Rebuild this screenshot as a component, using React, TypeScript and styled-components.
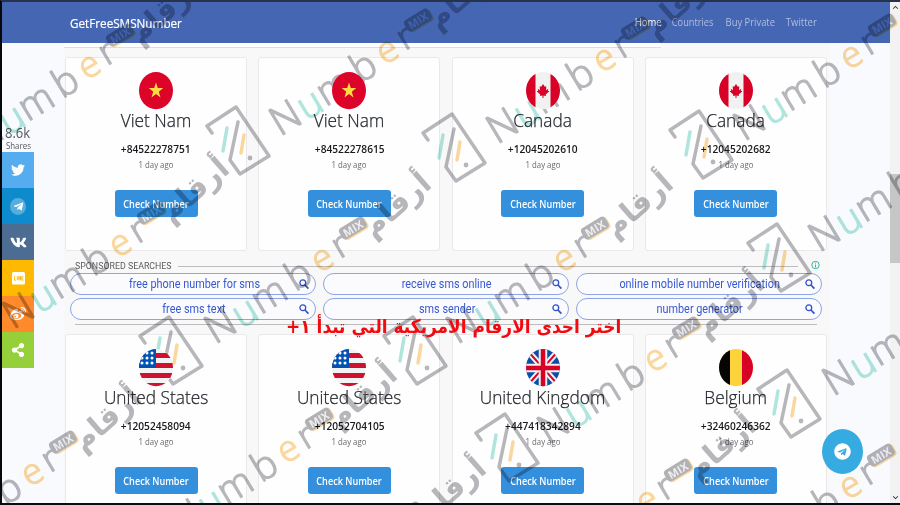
import React from "react";
import styled, { createGlobalStyle, css } from "styled-components";
import { FaTwitter, FaTelegramPlane, FaTelegram, FaVk, FaWeibo, FaShareAlt } from "react-icons/fa";
import { MdKeyboardArrowUp, MdKeyboardArrowDown } from "react-icons/md";

const Global = createGlobalStyle`
  * { box-sizing: border-box; }
  html, body { margin: 0; padding: 0; overflow: hidden; }
  body { font-family: "Open Sans", "Noto Sans", sans-serif; color: #2b2f33; }
`;

const Screen = styled.div`
  position: relative;
  display: flex;
  width: 900px;
  height: 505px;
  overflow: hidden;
  background: #f9fafe;
  border-top: 2px solid #27334c;
  border-left: 2px solid #07080c;
  border-bottom: 2px solid #0b0c12;
`;

const Main = styled.div`
  width: 888px;
  height: 501px;
  overflow: hidden;
`;

/* Text scaled horizontally around its anchor edge. */
const Fit = styled.span<{ $x: number; $origin?: string }>`
  display: inline-block;
  white-space: nowrap;
  transform: scaleX(${(p) => p.$x});
  transform-origin: ${(p) => p.$origin ?? "center"};
`;

const Header = styled.header`
  display: flex;
  align-items: center;
  justify-content: space-between;
  height: 41px;
  padding: 0 73px 0 68px;
  background: #4466b3;
`;

const Brand = styled.div`
  width: 116px;
  color: #fff;
  font-size: 13px;
  line-height: 18px;
  -webkit-text-stroke: 0.2px #fff;
`;

const Nav = styled.nav`
  display: grid;
  grid-template-columns: 26px 42px 50px 31px;
  column-gap: 11px;
`;

const NavLink = styled.a<{ $active?: boolean }>`
  display: flex;
  justify-content: center;
  font-size: 10px;
  line-height: 14px;
  margin-bottom: 2px;
  color: ${(p) => (p.$active ? "#fff" : "#b0bfdf")};
`;

const Body = styled.div`
  display: flex;
`;

const ShareBar = styled.aside`
  width: 32px;
  padding-top: 82px;
  text-align: center;
  color: #55585c;
`;

const ShareCount = styled.div`
  display: flex;
  justify-content: center;
  font-size: 14px;
  line-height: 16px;
`;

const ShareLabel = styled.div`
  display: flex;
  justify-content: center;
  height: 11px;
  font-size: 8.5px;
  line-height: 9px;
`;

const ShareButton = styled.div<{ $color: string }>`
  display: flex;
  align-items: center;
  justify-content: center;
  height: 36px;
  color: #fff;
  font-size: 14px;
  background: ${(p) => p.$color};
`;

const TelegramDisc = styled.span`
  display: grid;
  place-items: center;
  width: 16px;
  height: 17px;
  border-radius: 50%;
  color: #fff;
  background: #55aedd;
  font-size: 11px;
`;

const Content = styled.main`
  width: 766px;
  margin-left: 30px;
  background: #f8f8f9;
`;

const TopStrip = styled.div`
  width: 597px;
  height: 5px;
  border-bottom: 1px solid #dedede;
  background: #fff;
`;

const Cards = styled.div<{ $second?: boolean }>`
  display: grid;
  grid-template-columns: repeat(4, 182px);
  column-gap: 11.3px;
  padding: ${(p) => (p.$second ? "0" : "9px")} 0 0 1px;
`;

const Card = styled.article`
  display: flex;
  flex-direction: column;
  align-items: center;
  height: 194px;
  padding-top: 14px;
  border: 1px solid #e9e9ea;
  border-radius: 3px;
  background: #fefefe;
`;

const FlagSvg = styled.svg`
  position: relative;
  z-index: 1;
  width: 34px;
  height: 38px;
`;

const Country = styled.h3`
  margin: -3px 0 0;
  font-size: 18.6px;
  font-weight: 300;
  line-height: 26px;
  color: #23272c;
  -webkit-text-stroke: 0.25px #23272c;
`;

const Phone = styled.div`
  margin-top: 8px;
  font-size: 11px;
  font-weight: 600;
  line-height: 16px;
  color: #17191c;
`;

const Ago = styled.div`
  font-size: 8.5px;
  line-height: 16px;
  color: #65686c;
`;

const CheckButton = styled.button`
  width: 83px;
  height: 27px;
  margin-top: 17px;
  padding: 0;
  border: 0;
  border-radius: 3px;
  color: #fff;
  background: #3490dc;
  font: 600 10.6px/26px "Open Sans", sans-serif;
`;

const Ad = styled.section`
  height: 83px;
  padding: 9px 8px 0 6px;
  font-family: Roboto, sans-serif;
`;

const AdHead = styled.div`
  display: flex;
  align-items: center;
  gap: 4px;
  height: 12px;
  padding-left: 5px;
  font-size: 9px;
  color: #5c5c60;
`;

const Rule = styled.div`
  flex: 1;
  height: 1px;
  background: #bdbdc1;
`;

const AdGrid = styled.div`
  display: grid;
  grid-template-columns: repeat(3, 246px);
  grid-auto-rows: 22px;
  gap: 3px 7px;
  margin-top: 1px;
`;

const Pill = styled.div`
  display: flex;
  align-items: center;
  border: 1px solid #8da5e4;
  border-radius: 11px;
  background: #fbfbfd;
  color: #3659cf;
  font-size: 12px;
  line-height: 18px;
  padding-right: 5px;
`;

const PillText = styled.div`
  flex: 1;
  display: flex;
  justify-content: center;
  padding-left: 19px;
`;

const AdFoot = styled.div`
  display: flex;
  margin: 4px 5px 0;
`;

const Scrollbar = styled.div`
  display: flex;
  flex-direction: column;
  justify-content: space-between;
  align-items: center;
  width: 10px;
  height: 501px;
  font-size: 11px;
  color: #333;
  background: #f2f2f2;
`;

const Thumb = styled.div`
  width: 10px;
  height: 89px;
  margin-bottom: 68px;
  background: #c6c6c6;
`;

const over = css`
  position: absolute;
`;

const Caption = styled.div`
  ${over}
  left: 285px;
  top: 310px;
  width: 333px;
  display: flex;
  justify-content: center;
  direction: rtl;
  color: #f20a10;
  font: bold 19px/28px "DejaVu Sans", sans-serif;
`;

const ChatBubble = styled.div`
  ${over}
  left: 820px;
  top: 427px;
  width: 41px;
  height: 45px;
  display: grid;
  place-items: center;
  border-radius: 50%;
  background: #35abe2;
  color: #fff;
  font-size: 17px;
`;

const Overlay = styled.svg`
  ${over}
  left: -2px;
  top: -2px;
  width: 900px;
  height: 505px;
  opacity: 0.82;
  mix-blend-mode: multiply;
  pointer-events: none;
`;

type Land = "vn" | "ca" | "us" | "gb" | "be";

function Flag({ land }: { land: Land }) {
  const id = React.useId();
  return (
    <FlagSvg viewBox="0 0 34 38" preserveAspectRatio="none">
      <clipPath id={id}><ellipse cx="17" cy="18.6" rx="17" ry="18.6" /></clipPath>
      <g clipPath={`url(#${id})`}>
        {land === "vn" && (
          <>
            <rect width="34" height="38" fill="#dc0428" />
            <path d="M17 10.5l1.8 5.6h5.4l-4.4 3.6 1.7 5.8-4.5-3.5-4.5 3.5 1.7-5.8-4.4-3.6h5.4z" fill="#ffda44" />
          </>
        )}
        {land === "ca" && (
          <>
            <rect width="34" height="38" fill="#f1f1f1" />
            <path d="M0 0h9.5v38H0zM24.5 0H34v38h-9.5z" fill="#d80027" />
            <path d="M17 12l1.8 2.8 1.5-.5-.3 4 2.2-1.6-.4 2 1.6.5-3.7 3.2.3 1.5-2.5-.4V26h-1v-2.5l-2.5.4.3-1.5-3.7-3.2 1.6-.5-.4-2 2.2 1.6-.3-4 1.5.5z" fill="#d80027" />
          </>
        )}
        {land === "us" && (
          <>
            <rect width="34" height="38" fill="#f3f3f3" />
            <path d="M0 4h34v5H0zM0 14h34v5H0zM0 24h34v5H0zM0 34h34v5H0z" fill="#d0102f" />
            <rect width="17" height="19" fill="#0052b4" />
            <g fill="#fff">
              {[4, 9, 14].map((y) => [3, 8, 13].map((x) => <circle key={`${x}-${y}`} cx={x} cy={y} r="1.5" />))}
            </g>
          </>
        )}
        {land === "gb" && (
          <>
            <rect width="34" height="38" fill="#0b4ea8" />
            <path d="M0 0l34 38M34 0L0 38" stroke="#f0f0f0" strokeWidth="6" />
            <path d="M0 0l34 38M34 0L0 38" stroke="#d80027" strokeWidth="2" />
            <path d="M17 0v38M0 19h34" stroke="#f0f0f0" strokeWidth="8.5" />
            <path d="M17 0v38M0 19h34" stroke="#d80027" strokeWidth="4.5" />
          </>
        )}
        {land === "be" && (
          <>
            <rect width="34" height="38" fill="#fdd33c" />
            <rect width="11" height="38" fill="#050505" />
            <rect x="23" width="11" height="38" fill="#d80027" />
          </>
        )}
      </g>
    </FlagSvg>
  );
}

function LineIcon() {
  return (
    <svg width="13" height="13" viewBox="0 0 13 13">
      <rect width="13" height="12.5" rx="1.5" fill="#fff" />
      <path d="M2.5 4.2v4h1.7M5.3 4.2v4M6.8 8.2v-4l1.7 4v-4M11.2 4.2H9.8v4h1.4M9.8 6.2h1.3" fill="none" stroke="#ffb900" strokeWidth="0.9" />
    </svg>
  );
}

function SearchIcon() {
  return (
    <svg width="12" height="12" viewBox="0 0 12 12" fill="none" stroke="#2f52c8">
      <circle cx="4.8" cy="4.8" r="2.9" strokeWidth="1.3" />
      <path d="M7 7l3.4 3.6" strokeWidth="1.7" />
    </svg>
  );
}

type Item = { land: Land; name: string; phone: string };

const rowOne: Item[] = [
  { land: "vn", name: "Viet Nam", phone: "+84522278751" },
  { land: "vn", name: "Viet Nam", phone: "+84522278615" },
  { land: "ca", name: "Canada", phone: "+12045202610" },
  { land: "ca", name: "Canada", phone: "+12045202682" },
];
const rowTwo: Item[] = [
  { land: "us", name: "United States", phone: "+12052458094" },
  { land: "us", name: "United States", phone: "+12052704105" },
  { land: "gb", name: "United Kingdom", phone: "+447418342894" },
  { land: "be", name: "Belgium", phone: "+32460246362" },
];
const searches = [
  "free phone number for sms", "receive sms online", "online mobile number verification",
  "free sms text", "sms sender", "number generator",
];

function NumberCard({ item }: { item: Item }) {
  return (
    <Card>
      <Flag land={item.land} />
      <Country><Fit $x={0.93}>{item.name}</Fit></Country>
      <Phone><Fit $x={0.925}>{item.phone}</Fit></Phone>
      <Ago><Fit $x={0.92}>1 day ago</Fit></Ago>
      <CheckButton><Fit $x={0.86}>Check Number</Fit></CheckButton>
    </Card>
  );
}

const INK = "#a7a7ad";
const MINT = "#9fe1d6";
const GOLD = "#fbd08a";

const letters: [string, number, number, number, string][] = [
  ["N", -103, 65, 40, INK],
  ["u", -77, 54, 39, MINT],
  ["m", -53, 37, 39, INK],
  ["b", -25, 14, 39, INK],
  ["e", 0, 0, 36, GOLD],
  ["r", 18, -13, 36, INK],
];

function Wordmark({ x, y }: { x: number; y: number }) {
  return (
    <g transform={`translate(${x} ${y})`}>
      {letters.map(([ch, dx, dy, size, color]) => (
        <text
          key={ch}
          transform={`translate(${dx} ${dy + 2}) rotate(-31)`}
          y={ch === "N" || ch === "b" ? size * 0.36 : size * 0.27}
          textAnchor="middle"
          fontFamily="Open Sans"
          fontWeight="300"
          fontSize={size}
          fill={color}
          stroke={color}
          strokeWidth="1.3"
          strokeLinejoin="round"
        >
          {ch}
        </text>
      ))}
      <g transform="translate(31 -30) rotate(-31)">
        <rect x="-14" y="-5.5" width="28" height="13" rx="4" fill={GOLD} />
        <rect x="-15" y="-7" width="28" height="13" rx="4" fill="#a2a2a6" />
        <text x="-1" y="4" textAnchor="middle" fontFamily="Open Sans" fontWeight="700" fontSize="11" fill="#ececef">MIX</text>
      </g>
      <g transform="translate(76 -50) rotate(-41)">
        <text y="6" textAnchor="middle" fontFamily="DejaVu Sans" fontWeight="700" fontSize="30" textLength="80" lengthAdjust="spacingAndGlyphs" fill={INK}>أرقام</text>
      </g>
    </g>
  );
}

function PhoneMark({ x, y }: { x: number; y: number }) {
  return (
    <g transform={`translate(${x} ${y})`} fill="none" strokeWidth="3.5" strokeLinecap="round" strokeLinejoin="round">
      <path d="M-26-8L-31-15-2-34 31 15 2 33-8 19 0-19" stroke={INK} />
      <path d="M-11-13L-15 10" stroke={MINT} />
      <path d="M6-6L3 12" stroke={GOLD} />
      <circle cx="12" cy="17" r="2.4" fill={INK} stroke="none" />
    </g>
  );
}

const words: [number, number][] = [
  [90, 65], [388, 50], [605, 58], [852, 55], [121, 243], [323, 258], [565, 258], [927, 166],
  [656, 358], [33, 472], [289, 449], [378, 543], [648, 500], [851, 485], [941, 310],
];
const marks: [number, number][] = [
  [238, 141], [454, 148], [701, 145], [779, 258], [171, 351], [415, 351], [507, 448], [789, 404],
];

export default function App() {
  return (
    <>
      <Global />
      <Screen>
        <Main>
          <Header>
            <Brand><Fit $x={0.9} $origin="left">GetFreeSMSNumber</Fit></Brand>
            <Nav>
              <NavLink $active><Fit $x={0.95}>Home</Fit></NavLink>
              <NavLink><Fit $x={0.92}>Countries</Fit></NavLink>
              <NavLink><Fit $x={0.94}>Buy Private</Fit></NavLink>
              <NavLink><Fit $x={0.95}>Twitter</Fit></NavLink>
            </Nav>
          </Header>
          <Body>
            <ShareBar>
              <ShareCount><Fit $x={0.93}>8.6k</Fit></ShareCount>
              <ShareLabel><Fit $x={0.93}>Shares</Fit></ShareLabel>
              <ShareButton $color="#55acee"><FaTwitter /></ShareButton>
              <ShareButton $color="#0d8bcc"><TelegramDisc><FaTelegramPlane /></TelegramDisc></ShareButton>
              <ShareButton $color="#4c6c91"><FaVk size={17} /></ShareButton>
              <ShareButton $color="#ffb900"><LineIcon /></ShareButton>
              <ShareButton $color="#ff8a2b"><FaWeibo size={16} /></ShareButton>
              <ShareButton $color="#95d03a"><FaShareAlt /></ShareButton>
            </ShareBar>
            <Content>
              <TopStrip />
              <Cards>{rowOne.map((item) => <NumberCard key={item.phone} item={item} />)}</Cards>
              <Ad>
                <AdHead>
                  <Fit $x={0.98} $origin="left">SPONSORED SEARCHES</Fit>
                  <Rule />
                  <svg width="20" height="12" viewBox="0 0 20 12">
                    <circle cx="13.5" cy="5" r="3.7" fill="none" stroke="#35b5a5" />
                    <path d="M13.5 4.5v3M13.5 2.5v1" stroke="#35b5a5" />
                  </svg>
                </AdHead>
                <AdGrid>
                  {searches.map((s) => (
                    <Pill key={s}>
                      <PillText><Fit $x={0.905}>{s}</Fit></PillText>
                      <SearchIcon />
                    </Pill>
                  ))}
                </AdGrid>
                <AdFoot><Rule /></AdFoot>
              </Ad>
              <Cards $second>{rowTwo.map((item) => <NumberCard key={item.phone} item={item} />)}</Cards>
            </Content>
          </Body>
        </Main>
        <Scrollbar>
          <MdKeyboardArrowUp />
          <Thumb />
          <MdKeyboardArrowDown />
        </Scrollbar>
        <Overlay viewBox="0 0 900 505">
          {words.map(([x, y]) => <Wordmark key={`${x}-${y}`} x={x} y={y} />)}
          {marks.map(([x, y]) => <PhoneMark key={`${x}-${y}`} x={x} y={y} />)}
        </Overlay>
        <ChatBubble><FaTelegram /></ChatBubble>
        <Caption><Fit $x={0.893}>اختر احدى الارقام الامريكية التي تبدأ ١+</Fit></Caption>
      </Screen>
    </>
  );
}
